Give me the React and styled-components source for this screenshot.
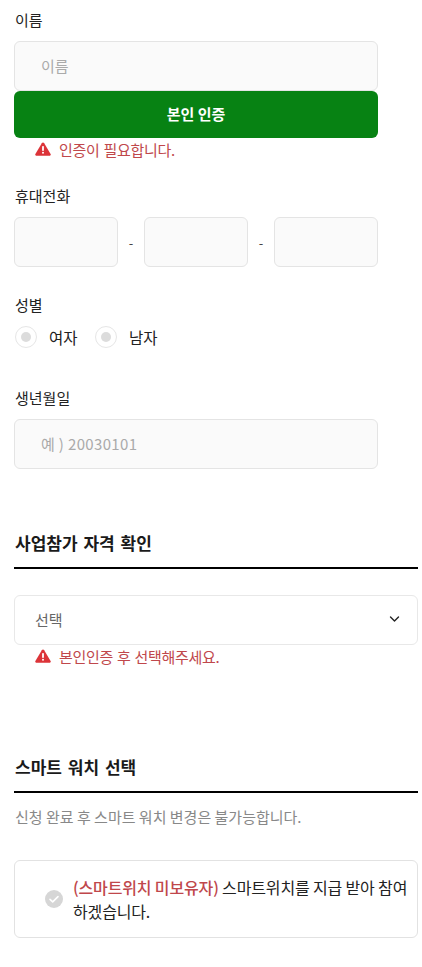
import React from 'react'
import styled, { createGlobalStyle } from 'styled-components'

const GlobalStyle = createGlobalStyle`
  html, body {
    margin: 0;
    padding: 0;
    background: #fff;
    font-family: "Noto Sans CJK KR", "Noto Sans", sans-serif;
    color: #222;
  }
  * {
    box-sizing: border-box;
  }
`

const Page = styled.div`
  width: 422px;
  height: 967px;
  overflow: hidden;
  padding: 10px 4px 0 14px;
`

const Field = styled.div`
  width: 364px;
  margin-bottom: ${(props) => props.$after || 0}px;
`

const Label = styled.div`
  font-size: 15px;
  line-height: 20px;
  margin-bottom: 11px;
  padding-left: 1px;
  color: #222;
`

const TextInput = styled.div`
  height: 50px;
  padding: 0 0 2px 26px;
  display: flex;
  align-items: center;
  background: #fafafa;
  border: 1px solid #e4e4e4;
  border-radius: 6px;
  font-size: 15px;
  letter-spacing: ${(props) => (props.$spaced ? '0.35px' : '0')};
  color: #aaa;
`

const VerifyButton = styled.button`
  display: block;
  width: 100%;
  height: 47px;
  padding: 0 0 2px;
  border: 0;
  border-radius: 6px;
  background: #078213;
  color: #fff;
  font-family: inherit;
  font-size: 15px;
  font-weight: 700;
`

const ErrorRow = styled.div`
  display: flex;
  align-items: center;
  gap: 8px;
  height: 20px;
  padding-left: 21px;
  margin-top: 1px;
  font-size: 15px;
  letter-spacing: -0.3px;
  word-spacing: 1px;
  color: #c0474b;
`

const PhoneRow = styled.div`
  display: flex;
  align-items: center;
`

const PhoneBox = styled(TextInput)`
  width: 104px;
  padding: 0;
  flex: none;
`

const Dash = styled.span`
  width: 26px;
  text-align: center;
  font-size: 13px;
  color: #444;
`

const RadioRow = styled.div`
  display: flex;
  align-items: center;
  height: 24px;
  margin-top: -1px;
  padding-left: 1px;
`

const RadioOuter = styled.span`
  width: 22px;
  height: 22px;
  display: flex;
  align-items: center;
  justify-content: center;
  border: 1px solid #e6e6e6;
  border-radius: 50%;
  background: #fff;
  &::after {
    content: '';
    width: 10px;
    height: 10px;
    border-radius: 50%;
    background: #dcdcdc;
  }
`

const RadioText = styled.span`
  width: 46px;
  margin-left: 12px;
  font-size: 15.5px;
  color: #222;
`

const Section = styled.section`
  width: 404px;
  margin-bottom: ${(props) => props.$after || 0}px;
`

const SectionTitle = styled.h2`
  margin: 0;
  height: 50px;
  padding: 12px 0 0 1px;
  border-bottom: 2px solid #000;
  font-size: 17px;
  line-height: 24px;
  word-spacing: 2px;
  font-weight: 700;
  color: #1a1a1a;
`

const Select = styled.div`
  height: 50px;
  margin-top: 26px;
  padding: 0 17px 2px 20px;
  display: flex;
  align-items: center;
  justify-content: space-between;
  border: 1px solid #e8e8e8;
  border-radius: 6px;
  background: #fff;
  font-size: 15px;
  color: #666;
`

const Notice = styled.p`
  margin: 14px 0 0;
  padding-left: 1px;
  font-size: 15px;
  line-height: 20px;
  color: #888;
`

const AgreeCard = styled.div`
  height: 78px;
  margin-top: 33px;
  padding-left: 30px;
  display: flex;
  align-items: center;
  gap: 10px;
  border: 1px solid #e2e2e2;
  border-radius: 6px;
  background: #fff;
`

const AgreeText = styled.div`
  width: 340px;
  font-size: 16px;
  line-height: 24px;
  letter-spacing: -0.15px;
  color: #222;
`

const Red = styled.span`
  font-weight: 500;
  color: #c0474b;
`

const WarnIcon = () => (
  <svg width="16" height="14" viewBox="0 0 16 14">
    <path
      d="M8 .6c.5 0 .9.3 1.2.7l6.4 10.6c.5.9-.1 1.9-1.1 1.9H1.5c-1 0-1.6-1-1.1-1.9L6.8 1.3C7.1.9 7.5.6 8 .6z"
      fill="#dc3439"
    />
    <rect x="7.1" y="4" width="1.8" height="5" rx=".8" fill="#fff" />
    <circle cx="8" cy="10.8" r="1" fill="#fff" />
  </svg>
)

const Chevron = () => (
  <svg width="11" height="8" viewBox="0 0 11 8" fill="none">
    <path d="M1.5 2l4 4 4-4" stroke="#222" strokeWidth="1.4" strokeLinecap="round" strokeLinejoin="round" />
  </svg>
)

const CheckCircle = () => (
  <svg width="18" height="18" viewBox="0 0 18 18" style={{ flex: 'none' }}>
    <circle cx="9" cy="9" r="9" fill="#d6d6d6" />
    <path d="M5 9.3l2.7 2.6L13 6.6" fill="none" stroke="#fff" strokeWidth="1.6" strokeLinecap="round" strokeLinejoin="round" />
  </svg>
)

const App = () => {
  return (
    <Page>
      <GlobalStyle />
      <Field $after={27}>
        <Label>이름</Label>
        <TextInput>이름</TextInput>
        <VerifyButton>본인 인증</VerifyButton>
        <ErrorRow>
          <WarnIcon />
          인증이 필요합니다.
        </ErrorRow>
      </Field>
      <Field $after={28}>
        <Label>휴대전화</Label>
        <PhoneRow>
          <PhoneBox />
          <Dash>-</Dash>
          <PhoneBox />
          <Dash>-</Dash>
          <PhoneBox />
        </PhoneRow>
      </Field>
      <Field $after={39}>
        <Label>성별</Label>
        <RadioRow>
          <RadioOuter />
          <RadioText>여자</RadioText>
          <RadioOuter />
          <RadioText>남자</RadioText>
        </RadioRow>
      </Field>
      <Field $after={50}>
        <Label>생년월일</Label>
        <TextInput $spaced>예 ) 20030101</TextInput>
      </Field>
      <Section $after={77}>
        <SectionTitle>사업참가 자격 확인</SectionTitle>
        <Select>
          선택
          <Chevron />
        </Select>
        <ErrorRow>
          <WarnIcon />
          본인인증 후 선택해주세요.
        </ErrorRow>
      </Section>
      <Section>
        <SectionTitle>스마트 워치 선택</SectionTitle>
        <Notice>신청 완료 후 스마트 워치 변경은 불가능합니다.</Notice>
        <AgreeCard>
          <CheckCircle />
          <AgreeText>
            <Red>(스마트위치 미보유자)</Red> 스마트위치를 지급 받아 참여하겠습니다.
          </AgreeText>
        </AgreeCard>
      </Section>
    </Page>
  )
}

export default App
